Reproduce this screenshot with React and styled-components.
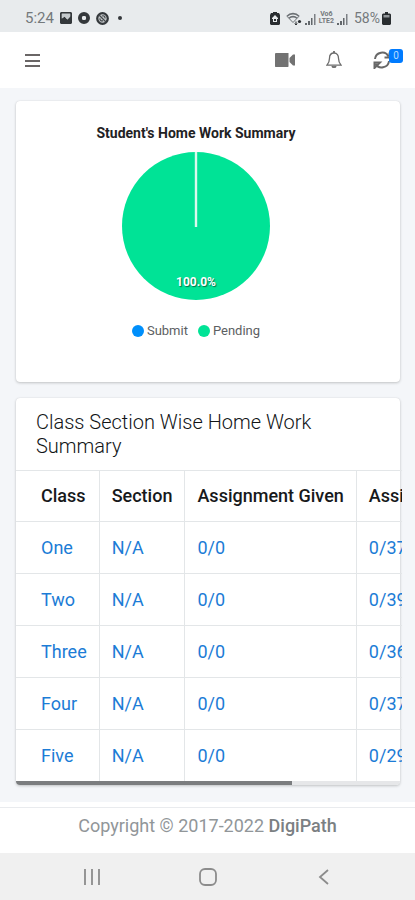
import React from 'react';
import styled, { createGlobalStyle } from 'styled-components';

const GlobalStyle = createGlobalStyle`
    * {
        box-sizing: border-box;
    }
    body {
        margin: 0;
        background-color: #f4f6f9;
        color: #212529;
        font-family: Roboto, "Liberation Sans", sans-serif;
    }
    button {
        border: none;
        padding: 0;
        background: none;
        color: inherit;
        font: inherit;
        cursor: pointer;
    }
    svg {
        display: block;
    }
`;

const rows = [
    { name: 'One', section: 'N/A', given: '0/0', submit: '0/37' },
    { name: 'Two', section: 'N/A', given: '0/0', submit: '0/39' },
    { name: 'Three', section: 'N/A', given: '0/0', submit: '0/36' },
    { name: 'Four', section: 'N/A', given: '0/0', submit: '0/37' },
    { name: 'Five', section: 'N/A', given: '0/0', submit: '0/29' },
];

const legend = [
    { label: 'Submit', color: '#008ffb' },
    { label: 'Pending', color: '#00e396' },
];

function SignalIcon() {
    return (
        <svg width="13" height="13" viewBox="0 0 13 13" fill="#62676b">
            <path d="M1 11h2v2H1zM4 9h2v4H4zM7 6h1.500v7H7z" />
            <path d="M10 2h1.500v11H10z" opacity="0.8" />
        </svg>
    );
}

function StatusBar() {
    return (
        <StatusBarStyled>
            <StatusGroup $gap="6px">
                <span>5:24</span>
                <svg width="12" height="12" viewBox="0 0 13 13">
                    <path fillRule="evenodd" fill="#34383b" d="M1 0h11l1 1v11l-1 1H1l-1-1V1zM2 2v5l3-2 3 3 3-3V2z" />
                    <path d="M2 2h9v3L8 8 5 5 2 7z" fill="#c5cacd" />
                </svg>
                <svg width="12" height="12" viewBox="0 0 13 13">
                    <circle cx="6.5" cy="6.5" r="4.4" fill="none" stroke="#34383b" strokeWidth="4.200" />
                    <circle cx="6.5" cy="6.5" r="2.3" fill="#e8ebed" />
                </svg>
                <svg width="13" height="13" viewBox="0 0 14 14">
                    <circle cx="7" cy="7" r="5.7" fill="#c4c8ca" stroke="#34383b" strokeWidth="2.4" />
                    <path d="M3 3l8 8M6.500 4.300c2-.8 3.500.5 3.200 2.500M4.300 6.800c-.3 2 1.200 3.300 3.200 2.500" fill="none" stroke="#45494c" strokeWidth="1.3" />
                </svg>
                <Dot />
            </StatusGroup>
            <StatusGroup $gap="2px">
                <svg width="10" height="13" viewBox="0 0 10 13">
                    <path fillRule="evenodd" fill="#292d30" d="M3 0h4v1h2l1 2v9l-1 1H1l-1-1V3l1-2h2zM5 3L2 6v1h1v3h4V7h1V6z" />
                    <path d="M4 7h2v2H4z" fill="#292d30" />
                </svg>
                <Spacer />
                <svg width="16" height="13" viewBox="0 0 16 13" fill="none" stroke="#6b7074">
                    <path d="M1 4.3C4.300 .7 9.700 .7 13 4.300M3 6.300c2.300-2.300 5.700-2.300 8 0" strokeWidth="1.600" />
                    <path d="M1 4.300L7 10.500l6-6.200" strokeWidth="1" />
                    <path d="M10 9.500v3.500M8.800 11.500l1.200 1.500 1.200-1.500" stroke="#292d30" />
                    <circle cx="13.500" cy="9.500" r="1.600" fill="#292d30" stroke="none" />
                </svg>
                <SignalIcon />
                <Volte>
                    <span>Vo6</span>
                    <span>LTE2</span>
                </Volte>
                <SignalIcon />
                <Percent>58%</Percent>
                <svg width="9" height="13" viewBox="0 0 9 13">
                    <path d="M3 0h3v1.500h2l1 1V12l-1 1H1l-1-1V2.500l1-1h2z" fill="#292d30" />
                    <path d="M1.500 3h6v2.500h-6z" fill="#92979a" />
                </svg>
            </StatusGroup>
        </StatusBarStyled>
    );
}

function Header() {
    return (
        <HeaderStyled>
            <IconButton aria-label="Menu">
                <svg width="15" height="16" viewBox="0 0 15 16" stroke="#6a6666" strokeWidth="2">
                    <path d="M0 3h15M0 9h15M0 14h15" />
                </svg>
            </IconButton>
            <HeaderActions>
                <IconButton aria-label="Video">
                    <svg width="20" height="14" viewBox="0 0 20 14" fill="#727272">
                        <path d="M.5 0h12.500l.5 .5v13l-.5 .5H.5L0 13.500v-13z" />
                        <path d="M14.500 5L18 1.500h2v11h-2L14.500 9z" />
                    </svg>
                </IconButton>
                <IconButton aria-label="Notifications">
                    <svg width="16" height="18" viewBox="0 0 16 18" fill="none" stroke="#6c6c6c" strokeWidth="1.300">
                        <path d="M8 2C4.800 2 3.500 4.400 3.500 7.300c0 3.700-1 5.200-2.600 6.900h14.200c-1.600-1.700-2.600-3.200-2.600-6.900C12.500 4.400 11.200 2 8 2z" />
                        <path d="M8 0v2M6.200 15c.3 1.500 3.300 1.500 3.600 0" strokeWidth="1.800" />
                    </svg>
                </IconButton>
                <IconButton aria-label="Refresh">
                    <svg width="18" height="18" viewBox="0 0 18 18" fill="none" stroke="#686868" strokeWidth="2">
                        <path d="M2 8c.8-7.200 10.500-8.800 13.500-2.500M16 10c-.8 7.200-10.500 8.800-13.500 2.500" />
                        <path d="M16.500 1.500v5h-5M1.500 17v-5.500h5.500z" />
                    </svg>
                    <Badge>0</Badge>
                </IconButton>
            </HeaderActions>
        </HeaderStyled>
    );
}

function SummaryChart() {
    return (
        <ChartCard>
            <ChartTitle>Student's Home Work Summary</ChartTitle>
            <svg width="148" height="148" viewBox="0 0 148 148">
                <circle cx="74" cy="74" r="74" fill="#00e396" />
                <path d="M74 0v75" stroke="#d9f9ed" strokeWidth="2.400" />
                <PieLabel x="74" y="134" textAnchor="middle">100.0%</PieLabel>
            </svg>
            <Legend>
                {legend.map((item) => (
                    <LegendItem key={item.label} $color={item.color}>{item.label}</LegendItem>
                ))}
            </Legend>
        </ChartCard>
    );
}

function SummaryTable() {
    return (
        <Card>
            <CardTitle>Class Section Wise Home Work Summary</CardTitle>
            <TableScroll>
                <Table>
                    <thead>
                        <tr>
                            <th>Class</th>
                            <th>Section</th>
                            <th>Assignment Given</th>
                            <th>Assignment Submit</th>
                        </tr>
                    </thead>
                    <tbody>
                        {rows.map((row) => (
                            <tr key={row.name}>
                                <td><a href="#class">{row.name}</a></td>
                                <td><a href="#section">{row.section}</a></td>
                                <td><a href="#given">{row.given}</a></td>
                                <td><a href="#submit">{row.submit}</a></td>
                            </tr>
                        ))}
                    </tbody>
                </Table>
            </TableScroll>
            <ScrollTrack>
                <ScrollThumb />
            </ScrollTrack>
        </Card>
    );
}

function NavBar() {
    return (
        <NavBarStyled>
            <IconButton aria-label="Recent apps">
                <svg width="16" height="16" viewBox="0 0 16 16" stroke="#8c8c8c" strokeWidth="1.800">
                    <path d="M1 0v16M8 0v16M15 0v16" />
                </svg>
            </IconButton>
            <IconButton aria-label="Home">
                <svg width="18" height="18" viewBox="0 0 18 18" fill="none" stroke="#8c8c8c" strokeWidth="1.800">
                    <rect x="1" y="1" width="16" height="16" rx="5" />
                </svg>
            </IconButton>
            <IconButton aria-label="Back">
                <svg width="16" height="16" viewBox="0 0 16 16" fill="none" stroke="#8c8c8c" strokeWidth="1.800">
                    <path d="M12 1L4 8l8 7" />
                </svg>
            </IconButton>
        </NavBarStyled>
    );
}

export default function App() {
    return (
        <>
            <GlobalStyle />
            <StatusBar />
            <Header />
            <Main>
                <SummaryChart />
                <SummaryTable />
            </Main>
            <Footer>
                <Copyright>
                    Copyright © 2017-2022 <b>DigiPath</b>
                </Copyright>
            </Footer>
            <NavBar />
        </>
    );
}

const StatusBarStyled = styled.div`
    display: flex;
    align-items: center;
    justify-content: space-between;
    padding: 8px 24px 4px 25px;
    background-color: #e8ebed;
    color: #74797c;
    font-size: 15px;
    line-height: 20px;
`;

const StatusGroup = styled.div`
    display: flex;
    align-items: center;
    gap: ${(props) => props.$gap};
`;

const Dot = styled.i`
    width: 4px;
    height: 4px;
    margin-left: 3px;
    border-radius: 50%;
    background-color: #34383b;
`;

const Spacer = styled.i`
    width: 2px;
`;

const Percent = styled.span`
    margin-left: 3px;
    font-size: 14px;
`;

const Volte = styled.span`
    display: flex;
    flex-direction: column;
    align-items: center;
    font-size: 7px;
    font-weight: 700;
    line-height: 7px;
`;

const HeaderStyled = styled.header`
    display: flex;
    align-items: center;
    justify-content: space-between;
    height: 56px;
    padding: 0 24px 0 25px;
    background-color: #fff;
`;

const HeaderActions = styled.div`
    display: flex;
    align-items: center;
    gap: 31px;
`;

const IconButton = styled.button`
    position: relative;
`;

const Badge = styled.span`
    position: absolute;
    top: -2px;
    right: -12px;
    width: 14px;
    border-radius: 3px;
    background-color: #007bff;
    color: #b5dcff;
    font-size: 10px;
    line-height: 14px;
    text-align: center;
`;

const Main = styled.main`
    display: grid;
    grid-template-columns: minmax(0, 1fr);
    gap: 16px;
    padding: 13px 15px 17px 16px;
`;

const Card = styled.section`
    border-radius: 4px;
    background-color: #fff;
    box-shadow: 0 0 1px rgba(0, 0, 0, 0.13), 0 1px 3px rgba(0, 0, 0, 0.2);
`;

const ChartCard = styled(Card)`
    display: flex;
    flex-direction: column;
    align-items: center;
    padding: 24px 24px 42px 0;
`;

const ChartTitle = styled.h2`
    margin: 0 0 11px;
    color: #1f2224;
    font-size: 14px;
    font-weight: 700;
    line-height: 16px;
`;

const PieLabel = styled.text`
    fill: #fff;
    font-size: 12px;
    font-weight: 700;
    text-shadow: 1px 1px 1px rgba(0, 0, 0, 0.5);
`;

const Legend = styled.div`
    display: flex;
    gap: 10px;
    margin-top: 22px;
`;

const LegendItem = styled.span`
    display: flex;
    align-items: center;
    gap: 3px;
    color: #5c6062;
    font-size: 13px;
    line-height: 18px;

    &::before {
        content: '';
        width: 12px;
        height: 12px;
        border-radius: 50%;
        background-color: ${(props) => props.$color};
    }
`;

const CardTitle = styled.h3`
    margin: 0;
    padding: 12px 20px;
    color: #111416;
    font-size: 20px;
    font-weight: 300;
    line-height: 24px;
`;

const TableScroll = styled.div`
    margin-right: -2px;
    overflow-x: auto;
    scrollbar-width: none;
`;

const Table = styled.table`
    border-collapse: collapse;
    font-size: 18px;
    line-height: 27px;
    white-space: nowrap;

    th,
    td {
        padding: 12px;
        border-top: 1px solid #e3e6e8;
        border-right: 1px solid #e3e6e8;
        text-align: left;
    }
    th {
        padding-top: 11px;
        color: #17191b;
        font-weight: 500;
    }
    th:first-child,
    td:first-child {
        padding-left: 25px;
    }
    th:last-child,
    td:last-child {
        padding-right: 25px;
        border-right: none;
    }
    a {
        color: #1c7cd6;
        text-decoration: none;
    }
`;

const ScrollTrack = styled.div`
    height: 4px;
    overflow: hidden;
    border-radius: 0 0 4px 4px;
    background-color: #e6e7e9;
`;

const ScrollThumb = styled.div`
    width: 72%;
    height: 100%;
    background-color: #7b7d7f;
`;

const Footer = styled.footer`
    padding-top: 5px;
    background-color: #fff;
    color: #919699;
    font-size: 18px;
    line-height: 24px;
    text-align: center;
`;

const Copyright = styled.div`
    padding: 6px 16px 15px;
    border-top: 1px solid #e9ebee;

    b {
        color: #7b8083;
        font-weight: 500;
    }
`;

const NavBarStyled = styled.nav`
    display: flex;
    align-items: center;
    justify-content: space-between;
    height: 47px;
    padding: 0 83px 0 84px;
    background-color: #f0f0f0;
`;
